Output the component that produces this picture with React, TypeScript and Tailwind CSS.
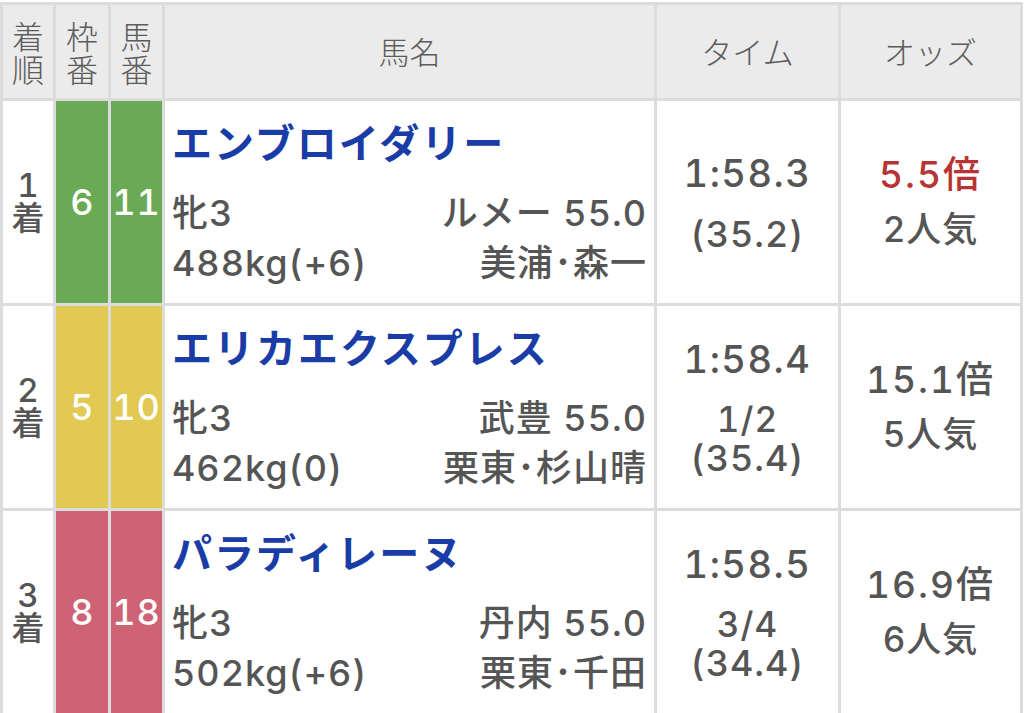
import React from "react";

type Row = {
  rank: string;
  waku: string;
  uma: string;
  color: string;
  name: string;
  sexAge: string;
  jockey: string;
  weight: string;
  trainer: string;
  time: string;
  margin?: string;
  last: string;
  odds: string;
  oddsRed?: boolean;
  pop: string;
};

const rows: Row[] = [
  {
    rank: "1",
    waku: "6",
    uma: "11",
    color: "bg-[#6aaa55]",
    name: "エンブロイダリー",
    sexAge: "牝3",
    jockey: "ルメー 55.0",
    weight: "488kg(+6)",
    trainer: "美浦･森一",
    time: "1:58.3",
    last: "(35.2)",
    odds: "5.5倍",
    oddsRed: true,
    pop: "2人気",
  },
  {
    rank: "2",
    waku: "5",
    uma: "10",
    color: "bg-[#e2c954]",
    name: "エリカエクスプレス",
    sexAge: "牝3",
    jockey: "武豊 55.0",
    weight: "462kg(0)",
    trainer: "栗東･杉山晴",
    time: "1:58.4",
    margin: "1/2",
    last: "(35.4)",
    odds: "15.1倍",
    pop: "5人気",
  },
  {
    rank: "3",
    waku: "8",
    uma: "18",
    color: "bg-[#cf6376]",
    name: "パラディレーヌ",
    sexAge: "牝3",
    jockey: "丹内 55.0",
    weight: "502kg(+6)",
    trainer: "栗東･千田",
    time: "1:58.5",
    margin: "3/4",
    last: "(34.4)",
    odds: "16.9倍",
    pop: "6人気",
  },
];

const cjk = { fontFamily: '"Noto Sans CJK JP", "Noto Sans", sans-serif' };
const mixed = { fontFamily: 'Inter, "Noto Sans CJK JP", sans-serif' };

export default function App() {
  return (
    <div className="w-[1024px] h-[713px] overflow-hidden bg-white pt-[2px]" style={cjk}>
      <div className="grid grid-cols-[50px_52px_51px_489px_181px_179px] grid-rows-[93px_202px_202px_202px] gap-[3px] bg-[#dcdcdc] p-[3px] w-[1023px] text-[#555]">
        {/* header */}
        <div className="bg-[#ebebeb] flex items-center justify-center text-center text-[32px] leading-[33px] font-light text-[#5c5c5c]">
          <span>
            着<br />順
          </span>
        </div>
        <div className="bg-[#ebebeb] flex items-center justify-center text-center text-[32px] leading-[33px] font-light text-[#5c5c5c]">
          <span>
            枠<br />番
          </span>
        </div>
        <div className="bg-[#ebebeb] flex items-center justify-center text-center text-[32px] leading-[33px] font-light text-[#5c5c5c]">
          <span>
            馬<br />番
          </span>
        </div>
        <div className="bg-[#ebebeb] flex items-center justify-center text-[31px] font-light text-[#5c5c5c]">馬名</div>
        <div className="bg-[#ebebeb] flex items-center justify-center text-[31px] font-light text-[#5c5c5c]">タイム</div>
        <div className="bg-[#ebebeb] flex items-center justify-center text-[31px] font-light text-[#5c5c5c]">オッズ</div>

        {rows.map((r) => (
          <React.Fragment key={r.rank}>
            <div className="bg-white flex items-center justify-center text-center text-[33px] leading-[33px] font-medium">
              <span style={mixed} className="tabular-nums">
                {r.rank}
                <br />着
              </span>
            </div>
            <div className={`${r.color} flex items-center justify-center text-white text-[36px] font-medium tabular-nums`} style={mixed}>
              {r.waku}
            </div>
            <div className={`${r.color} flex items-center justify-center text-white text-[36px] font-medium tabular-nums tracking-[1px]`} style={mixed}>
              {r.uma}
            </div>
            <div className="bg-white flex flex-col px-[7px] pt-[16px]">
              <div className="text-[#1a3ca6] text-[40px] leading-[48px] font-bold tracking-[2px]">{r.name}</div>
              <div className="mt-[23px] text-[36px] leading-[50px] font-medium tabular-nums tracking-[1px]" style={mixed}>
                <div className="flex justify-between">
                  <span>{r.sexAge}</span>
                  <span>{r.jockey}</span>
                </div>
                <div className="flex justify-between">
                  <span>{r.weight}</span>
                  <span>{r.trainer}</span>
                </div>
              </div>
            </div>
            <div className="bg-white flex flex-col items-center justify-center font-medium tabular-nums" style={mixed}>
              <div className="text-[38px] leading-[44px] mb-[19px] tracking-[1.5px]">{r.time}</div>
              {r.margin && <div className="text-[35px] leading-[38px] tracking-[1px]">{r.margin}</div>}
              <div className="text-[36px] leading-[40px] tracking-[1px]">{r.last}</div>
            </div>
            <div className="bg-white flex flex-col items-center justify-center font-medium tabular-nums" style={mixed}>
              <div className={`text-[37px] leading-[54px] tracking-[2px] ${r.oddsRed ? "text-[#b83333]" : ""}`}>{r.odds}</div>
              <div className="text-[35px] leading-[54px] tracking-[1px]">{r.pop}</div>
            </div>
          </React.Fragment>
        ))}
      </div>
    </div>
  );
}
